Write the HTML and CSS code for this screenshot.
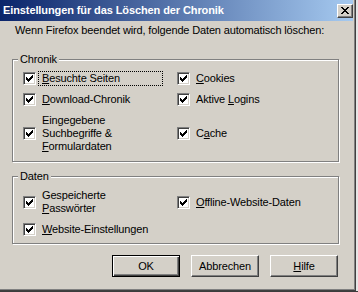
FILE: index.html
```html
<!DOCTYPE html>
<html lang="de">
<head>
  <meta charset="UTF-8">
  <title>Einstellungen für das Löschen der Chronik</title>
  <link rel="stylesheet" href="styles.css">
</head>
<body>
<div class="window">
  <div class="titlebar">
    <span class="title">Einstellungen für das Löschen der Chronik</span>
    <span class="close-btn">
      <svg width="8" height="7" viewBox="0 0 8 7" shape-rendering="crispEdges"><path d="M0 0h2v1h-2zM6 0h2v1h-2zM1 1h2v1h-2zM5 1h2v1h-2zM2 2h4v1h-4zM3 3h2v1h-2zM2 4h4v1h-4zM1 5h2v1h-2zM5 5h2v1h-2zM0 6h2v1h-2zM6 6h2v1h-2z" fill="#000"/></svg>
    </span>
  </div>

  <div class="content">
    <p class="intro">Wenn Firefox beendet wird, folgende Daten automatisch löschen:</p>

    <!-- Chronik -->
    <div class="group">
      <span class="legend">Chronik</span>
      <div class="options">
        <div class="option">
          <span class="cb"><svg width="7" height="7" viewBox="0 0 7 7" shape-rendering="crispEdges"><path d="M6 0h1v1h-1zM5 1h2v1h-2zM0 2h1v1h-1zM4 2h3v1h-3zM0 3h2v1h-2zM3 3h3v1h-3zM0 4h5v1h-5zM1 5h3v1h-3zM2 6h1v1h-1z"/></svg></span>
          <span class="label focus"><u>B</u>esuchte Seiten</span>
        </div>
        <div class="option">
          <span class="cb"><svg width="7" height="7" viewBox="0 0 7 7" shape-rendering="crispEdges"><path d="M6 0h1v1h-1zM5 1h2v1h-2zM0 2h1v1h-1zM4 2h3v1h-3zM0 3h2v1h-2zM3 3h3v1h-3zM0 4h5v1h-5zM1 5h3v1h-3zM2 6h1v1h-1z"/></svg></span>
          <span class="label"><u>C</u>ookies</span>
        </div>
        <div class="option">
          <span class="cb"><svg width="7" height="7" viewBox="0 0 7 7" shape-rendering="crispEdges"><path d="M6 0h1v1h-1zM5 1h2v1h-2zM0 2h1v1h-1zM4 2h3v1h-3zM0 3h2v1h-2zM3 3h3v1h-3zM0 4h5v1h-5zM1 5h3v1h-3zM2 6h1v1h-1z"/></svg></span>
          <span class="label"><u>D</u>ownload-Chronik</span>
        </div>
        <div class="option">
          <span class="cb"><svg width="7" height="7" viewBox="0 0 7 7" shape-rendering="crispEdges"><path d="M6 0h1v1h-1zM5 1h2v1h-2zM0 2h1v1h-1zM4 2h3v1h-3zM0 3h2v1h-2zM3 3h3v1h-3zM0 4h5v1h-5zM1 5h3v1h-3zM2 6h1v1h-1z"/></svg></span>
          <span class="label">Aktive <u>L</u>ogins</span>
        </div>
        <div class="option">
          <span class="cb"><svg width="7" height="7" viewBox="0 0 7 7" shape-rendering="crispEdges"><path d="M6 0h1v1h-1zM5 1h2v1h-2zM0 2h1v1h-1zM4 2h3v1h-3zM0 3h2v1h-2zM3 3h3v1h-3zM0 4h5v1h-5zM1 5h3v1h-3zM2 6h1v1h-1z"/></svg></span>
          <span class="label">Eingegebene<br>Suchbegriffe &amp;<br><u>F</u>ormulardaten</span>
        </div>
        <div class="option">
          <span class="cb"><svg width="7" height="7" viewBox="0 0 7 7" shape-rendering="crispEdges"><path d="M6 0h1v1h-1zM5 1h2v1h-2zM0 2h1v1h-1zM4 2h3v1h-3zM0 3h2v1h-2zM3 3h3v1h-3zM0 4h5v1h-5zM1 5h3v1h-3zM2 6h1v1h-1z"/></svg></span>
          <span class="label">C<u>a</u>che</span>
        </div>
      </div>
    </div>

    <!-- Daten -->
    <div class="group daten">
      <span class="legend">Daten</span>
      <div class="options">
        <div class="option">
          <span class="cb"><svg width="7" height="7" viewBox="0 0 7 7" shape-rendering="crispEdges"><path d="M6 0h1v1h-1zM5 1h2v1h-2zM0 2h1v1h-1zM4 2h3v1h-3zM0 3h2v1h-2zM3 3h3v1h-3zM0 4h5v1h-5zM1 5h3v1h-3zM2 6h1v1h-1z"/></svg></span>
          <span class="label">Gespeicherte<br><u>P</u>asswörter</span>
        </div>
        <div class="option">
          <span class="cb"><svg width="7" height="7" viewBox="0 0 7 7" shape-rendering="crispEdges"><path d="M6 0h1v1h-1zM5 1h2v1h-2zM0 2h1v1h-1zM4 2h3v1h-3zM0 3h2v1h-2zM3 3h3v1h-3zM0 4h5v1h-5zM1 5h3v1h-3zM2 6h1v1h-1z"/></svg></span>
          <span class="label"><u>O</u>ffline-Website-Daten</span>
        </div>
        <div class="option">
          <span class="cb"><svg width="7" height="7" viewBox="0 0 7 7" shape-rendering="crispEdges"><path d="M6 0h1v1h-1zM5 1h2v1h-2zM0 2h1v1h-1zM4 2h3v1h-3zM0 3h2v1h-2zM3 3h3v1h-3zM0 4h5v1h-5zM1 5h3v1h-3zM2 6h1v1h-1z"/></svg></span>
          <span class="label"><u>W</u>ebsite-Einstellungen</span>
        </div>
      </div>
    </div>

    <div class="buttons">
      <button class="btn default">OK</button>
      <button class="btn">Abbrechen</button>
      <button class="btn"><u>H</u>ilfe</button>
    </div>
  </div>
</div>
</body>
</html>
```

FILE: styles.css
```css
body {
    margin: 0;
    font-family: "Liberation Sans", Arial, sans-serif;
    font-size: 11px;
    letter-spacing: -0.15px;
    color: #000;
    background: linear-gradient(to bottom, #e6e6e6 291px, #3c3c3c 291px);
    height: 292px;
    overflow: hidden;
}

.window {
    box-sizing: border-box;
    width: 356px;
    height: 291px;
    padding-right: 2px;
    background-color: #d4d0c8;
    border-right: 1px solid #404040;
    border-bottom: 1px solid #404040;
    box-shadow: inset -1px -1px #808080;
}

.titlebar {
    height: 21px;
    display: flex;
    align-items: center;
    justify-content: space-between;
    background: linear-gradient(to right, #0a246a, #a6caf0);
}

.title {
    padding-left: 3px;
    color: #fff;
    font-weight: bold;
    font-size: 11px;
    line-height: 13px;
    letter-spacing: -0.1px;
}

.close-btn {
    box-sizing: border-box;
    width: 16px;
    height: 14px;
    display: flex;
    align-items: center;
    justify-content: center;
    background-color: #d4d0c8;
    border: 1px solid;
    border-color: #fff #404040 #404040 #fff;
    box-shadow: inset -1px -1px #808080;
}

.content {
    padding-left: 12px;
}

.intro {
    margin: 3px 0 0 3px;
    line-height: 13px;
}

.group {
    position: relative;
    width: 327px;
    box-sizing: border-box;
    margin-top: 22px;
    border: 1px solid #808080;
    box-shadow: inset 1px 1px #fff, 1px 1px #fff;
}

.group.daten {
    margin-top: 14px;
}

.legend {
    position: absolute;
    top: -7px;
    left: 5px;
    padding: 0 2px;
    line-height: 13px;
    background-color: #d4d0c8;
}

.options {
    display: grid;
    grid-template-columns: 154px 1fr;
    row-gap: 6px;
    align-items: center;
    padding: 11px 0 7px 10px;
}

.daten .options {
    padding-bottom: 6px;
}

.option {
    display: flex;
    align-items: center;
}

.cb {
    flex: none;
    box-sizing: border-box;
    width: 13px;
    height: 13px;
    display: flex;
    align-items: center;
    justify-content: center;
    background-color: #fff;
    border: 1px solid;
    border-color: #808080 #fff #fff #808080;
    box-shadow: inset 1px 1px #404040, inset -1px -1px #d4d0c8;
}

.label {
    margin-left: 2px;
    padding: 0 3px;
    line-height: 13px;
    border: 1px dotted transparent;
}

.label.focus {
    width: 117px;
    border-color: #000;
}

.buttons {
    display: flex;
    gap: 11px;
    margin-top: 11px;
    padding-left: 100px;
}

.btn {
    box-sizing: border-box;
    width: 68px;
    height: 22px;
    padding: 0;
    font-family: "Liberation Sans", Arial, sans-serif;
    font-size: 11px;
    letter-spacing: -0.15px;
    color: #000;
    background-color: #d4d0c8;
    border: 1px solid;
    border-color: #fff #404040 #404040 #fff;
    box-shadow: inset -1px -1px #808080;
}

.btn.default {
    border: 1px solid #000;
    box-shadow: inset 1px 1px #fff, inset -1px -1px #404040, inset -2px -2px #808080;
}
```
